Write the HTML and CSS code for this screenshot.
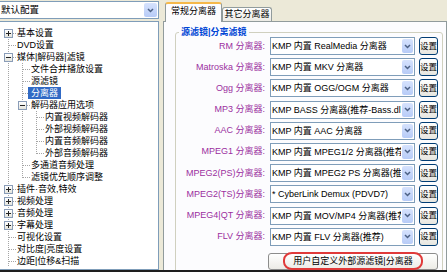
FILE: index.html
```html
<!DOCTYPE html>
<html lang="zh">
<head>
  <meta charset="UTF-8" />
  <title>分离器设置</title>
  <link rel="stylesheet" href="styles.css">
</head>
<body>

  <div class="app">
    <div class="left">
      <div class="combo">
        <span class="combo-text">默认配置</span>
        <span class="drop big"><svg width="7" height="5" viewBox="0 0 7 5"><path d="M1 1l2.5 2.5L6 1" fill="none" stroke="#4d6185" stroke-width="1.5"/></svg></span>
      </div>

      <!-- settings tree -->
      <div class="tree">
        <div class="node"><i class="f"><b class="box plus"></b></i><span>基本设置</span></div>
        <div class="node"><i class="t"></i><span>DVD设置</span></div>
        <div class="node"><i class="t"><b class="box minus"></b></i><span>媒体|解码器|滤镜</span></div>
        <div class="node"><i class="g"></i><i class="t"></i><span>文件合并播放设置</span></div>
        <div class="node"><i class="g"></i><i class="t"></i><span>源滤镜</span></div>
        <div class="node"><i class="g"></i><i class="t"></i><span class="sel">分离器</span></div>
        <div class="node"><i class="g"></i><i class="t"><b class="box minus"></b></i><span>解码器应用选项</span></div>
        <div class="node"><i class="g"></i><i class="g"></i><i class="t"></i><span>内置视频解码器</span></div>
        <div class="node"><i class="g"></i><i class="g"></i><i class="t"></i><span>外部视频解码器</span></div>
        <div class="node"><i class="g"></i><i class="g"></i><i class="t"></i><span>内置音频解码器</span></div>
        <div class="node"><i class="g"></i><i class="g"></i><i class="l"></i><span>外部音频解码器</span></div>
        <div class="node"><i class="g"></i><i class="t"></i><span>多通道音频处理</span></div>
        <div class="node"><i class="g"></i><i class="l"></i><span>滤镜优先顺序调整</span></div>
        <div class="node"><i class="t"><b class="box plus"></b></i><span>插件·音效,特效</span></div>
        <div class="node"><i class="t"><b class="box plus"></b></i><span>视频处理</span></div>
        <div class="node"><i class="t"><b class="box plus"></b></i><span>音频处理</span></div>
        <div class="node"><i class="t"><b class="box plus"></b></i><span>字幕处理</span></div>
        <div class="node"><i class="t"></i><span>可视化设置</span></div>
        <div class="node"><i class="t"></i><span>对比度|亮度设置</span></div>
        <div class="node"><i class="t"></i><span>边距|位移&amp;扫描</span></div>
      </div>
    </div>

    <div class="right">
      <div class="tabs">
        <div class="tab active">常规分离器</div>
        <div class="tab">其它分离器</div>
      </div>

      <div class="page">
        <fieldset class="group">
          <legend>源滤镜|分离滤镜</legend>
          <div class="rows">
            <label>RM 分离器:</label>
            <div class="select"><span>KMP 内置 RealMedia 分离器</span><i class="drop"><svg width="7" height="5" viewBox="0 0 7 5"><path d="M1 1l2.5 2.5L6 1" fill="none" stroke="#4d6185" stroke-width="1.5"/></svg></i></div>
            <button class="set">设置</button>

            <label>Matroska 分离器:</label>
            <div class="select"><span>KMP 内置 MKV 分离器</span><i class="drop"><svg width="7" height="5" viewBox="0 0 7 5"><path d="M1 1l2.5 2.5L6 1" fill="none" stroke="#4d6185" stroke-width="1.5"/></svg></i></div>
            <button class="set">设置</button>

            <label>Ogg 分离器:</label>
            <div class="select"><span>KMP 内置 OGG/OGM 分离器</span><i class="drop"><svg width="7" height="5" viewBox="0 0 7 5"><path d="M1 1l2.5 2.5L6 1" fill="none" stroke="#4d6185" stroke-width="1.5"/></svg></i></div>
            <button class="set">设置</button>

            <label>MP3 分离器:</label>
            <div class="select"><span>KMP BASS 分离器(推荐-Bass.dll)</span><i class="drop"><svg width="7" height="5" viewBox="0 0 7 5"><path d="M1 1l2.5 2.5L6 1" fill="none" stroke="#4d6185" stroke-width="1.5"/></svg></i></div>
            <button class="set">设置</button>

            <label>AAC 分离器:</label>
            <div class="select"><span>KMP 内置 AAC 分离器</span><i class="drop"><svg width="7" height="5" viewBox="0 0 7 5"><path d="M1 1l2.5 2.5L6 1" fill="none" stroke="#4d6185" stroke-width="1.5"/></svg></i></div>
            <button class="set">设置</button>

            <label>MPEG1 分离器:</label>
            <div class="select"><span>KMP 内置 MPEG1/2 分离器(推荐)</span><i class="drop"><svg width="7" height="5" viewBox="0 0 7 5"><path d="M1 1l2.5 2.5L6 1" fill="none" stroke="#4d6185" stroke-width="1.5"/></svg></i></div>
            <button class="set">设置</button>

            <label>MPEG2(PS)分离器:</label>
            <div class="select"><span>KMP 内置 MPEG2 PS 分离器(推荐)</span><i class="drop"><svg width="7" height="5" viewBox="0 0 7 5"><path d="M1 1l2.5 2.5L6 1" fill="none" stroke="#4d6185" stroke-width="1.5"/></svg></i></div>
            <button class="set">设置</button>

            <label>MPEG2(TS)分离器:</label>
            <div class="select"><span>* CyberLink Demux (PDVD7)</span><i class="drop"><svg width="7" height="5" viewBox="0 0 7 5"><path d="M1 1l2.5 2.5L6 1" fill="none" stroke="#4d6185" stroke-width="1.5"/></svg></i></div>
            <button class="set">设置</button>

            <label>MPEG4|QT 分离器:</label>
            <div class="select"><span>KMP 内置 MOV/MP4 分离器(推荐)</span><i class="drop"><svg width="7" height="5" viewBox="0 0 7 5"><path d="M1 1l2.5 2.5L6 1" fill="none" stroke="#4d6185" stroke-width="1.5"/></svg></i></div>
            <button class="set">设置</button>

            <label>FLV 分离器:</label>
            <div class="select"><span>KMP 内置 FLV 分离器(推荐)</span><i class="drop"><svg width="7" height="5" viewBox="0 0 7 5"><path d="M1 1l2.5 2.5L6 1" fill="none" stroke="#4d6185" stroke-width="1.5"/></svg></i></div>
            <button class="set">设置</button>

            <button class="custom"><span class="mark">用户自定义外部源滤镜|分离器</span></button>
          </div>
        </fieldset>
      </div>
    </div>
  </div>

</body>
</html>
```

FILE: styles.css
```css
body {
  margin: 0;
  width: 447px;
  height: 272px;
  overflow: hidden;
  background: #ece9d8;
  font-family: 'Liberation Sans', 'Noto Sans CJK SC', sans-serif;
  font-size: 9px;
  color: #000;
}

.app {
  display: flex;
  height: 270px;
  border-bottom: 2px solid #1e1e1e;
}

/* left side: profile combo + tree */
.left {
  width: 159px;
  display: flex;
  flex-direction: column;
  gap: 2px;
  padding-top: 1px;
}

.combo {
  height: 18px;
  box-sizing: border-box;
  border: 1px solid #7f9db9;
  border-left: none;
  background: #fff;
  display: flex;
  align-items: center;
  padding-left: 1px;
  font-size: 9.5px;
}

.combo-text {
  flex: 1;
  line-height: 12px;
}

.drop {
  display: flex;
  align-items: center;
  justify-content: center;
  width: 11px;
  align-self: stretch;
  margin: 1px;
  border-radius: 2px;
  background: linear-gradient(#d6e2fd, #b7cbf7);
}

.drop.big {
  width: 13px;
}

.tree {
  flex: 1;
  background: #fff;
  border: 1px solid #7f9db9;
  border-left: none;
  padding: 5px 0 0 2px;
  --vd: repeating-linear-gradient(#a5a5a5 0 1px, transparent 1px 2px);
  --hd: repeating-linear-gradient(90deg, #a5a5a5 0 1px, transparent 1px 2px);
}

.node {
  display: flex;
  height: 12px;
  line-height: 12px;
  white-space: nowrap;
}

.node i {
  width: 14px;
  flex: none;
}

.node .g {
  background: var(--vd) 6px 0 / 1px 100% no-repeat;
}

.node .t {
  background: var(--vd) 6px 0 / 1px 100% no-repeat, var(--hd) 7px 6px / 7px 1px no-repeat;
}

.node .l {
  background: var(--vd) 6px 0 / 1px 7px no-repeat, var(--hd) 7px 6px / 7px 1px no-repeat;
}

.node .f {
  background: var(--vd) 6px 6px / 1px 6px no-repeat, var(--hd) 7px 6px / 7px 1px no-repeat;
}

.box {
  display: block;
  width: 9px;
  height: 9px;
  box-sizing: border-box;
  margin: 2px 0 0 2px;
  border: 1px solid #8a9db8;
}

.box.plus {
  background: linear-gradient(#222, #222) center / 5px 1px no-repeat,
              linear-gradient(#222, #222) center / 1px 5px no-repeat,
              linear-gradient(#fff, #e4e4dc);
}

.box.minus {
  background: linear-gradient(#222, #222) center / 5px 1px no-repeat,
              linear-gradient(#fff, #e4e4dc);
}

.node span {
  padding: 0 1px;
}

.node .sel {
  background: #316ac5;
  color: #fff;
  padding: 0 3px;
  margin-left: -2px;
}

/* right side: tabs and page */
.right {
  flex: 1;
  display: flex;
  flex-direction: column;
  margin-left: 4px;
}

.tabs {
  display: flex;
  align-items: flex-end;
  height: 21px;
  padding-left: 2px;
}

.tab {
  box-sizing: border-box;
  width: 50px;
  height: 14px;
  border: 1px solid #919b9c;
  border-bottom: none;
  border-radius: 3px 3px 0 0;
  background: linear-gradient(#fefefe, #ecebe5);
  text-align: center;
  line-height: 13px;
}

.tab.active {
  position: relative;
  z-index: 1;
  width: 57px;
  height: 20px;
  margin-bottom: -1px;
  border-top: 2px solid #f5b84a;
  background: #fcfcfe;
  line-height: 15px;
}

.page {
  flex: 1;
  overflow: hidden;
  border: 1px solid #919b9c;
  border-bottom: none;
  background: #fcfcfe;
  padding-top: 5px;
}

.group {
  margin: 0 3px 0 11px;
  padding: 0 0 10px;
  border: 1px solid #d0d0bf;
  border-radius: 3px;
  min-width: 0;
}

.group legend {
  margin-left: 3px;
  padding: 0 2px;
  line-height: 10px;
  font-weight: bold;
  color: #0046d5;
}

.rows {
  display: grid;
  grid-template-columns: 90px 145px 19px;
  grid-auto-rows: 18px;
  column-gap: 4px;
  row-gap: 3.2px;
}

.rows label {
  align-self: center;
  text-align: right;
  padding-right: 1px;
  color: #9b2f9f;
  line-height: 11px;
  white-space: nowrap;
}

.select {
  display: flex;
  box-sizing: border-box;
  border: 1px solid #7f9db9;
  background: #fff;
  overflow: hidden;
}

.select span {
  flex: 1;
  overflow: hidden;
  white-space: nowrap;
  padding-left: 1px;
  line-height: 16px;
}

.set {
  box-sizing: border-box;
  margin: 0;
  padding: 0;
  border: 1px solid #003c74;
  border-radius: 3px;
  background: linear-gradient(#fff, #e6e5df);
  font-family: inherit;
  font-size: 8.5px;
  line-height: 15px;
  color: #000;
  white-space: nowrap;
  overflow: visible;
}

.custom {
  grid-column: 2 / 4;
  margin: 3.8px 0 0 -2px;
  height: 17px;
  padding: 0;
  display: flex;
  justify-content: center;
  align-items: center;
  border: 1px solid #8c8c8c;
  border-radius: 3px;
  background: linear-gradient(#fff, #ecebe6);
  font-family: inherit;
  font-size: 9px;
  color: #000;
}

.custom .mark {
  padding: 0 8px;
  height: 14px;
  line-height: 14px;
  border: 2px solid #e03a3a;
  border-radius: 9px / 8px;
  white-space: nowrap;
}
```
